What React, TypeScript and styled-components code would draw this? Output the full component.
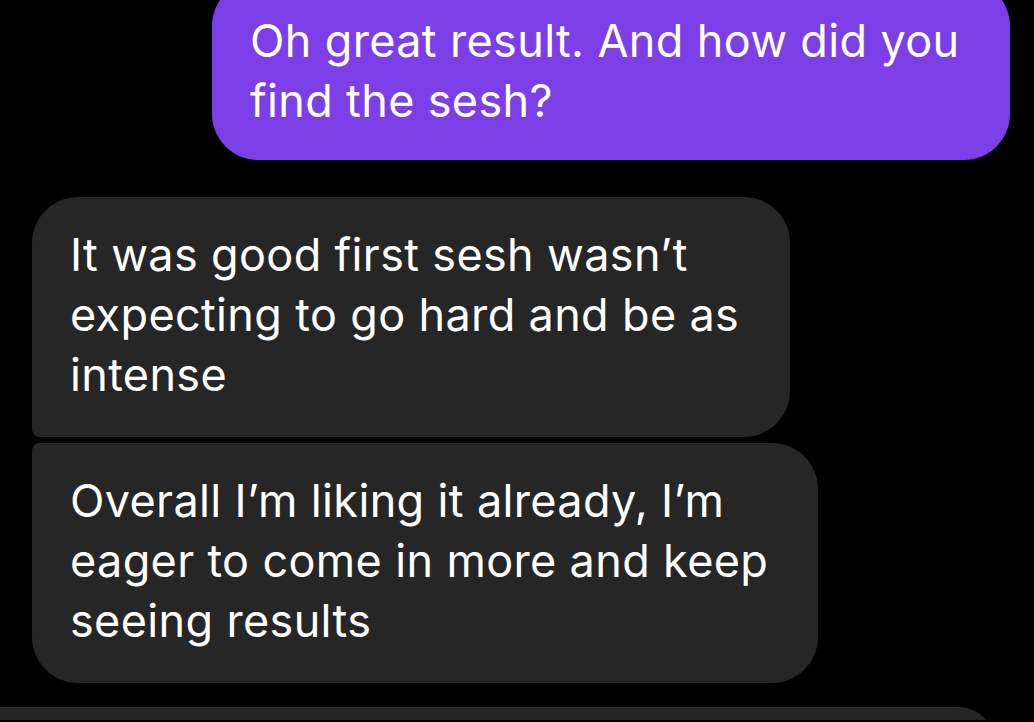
import React from "react";
import styled, { createGlobalStyle } from "styled-components";

const Global = createGlobalStyle`
  html, body {
    margin: 0;
    padding: 0;
    background: #000;
    overflow: hidden;
  }
  body {
    font-family: Inter, Roboto, "Liberation Sans", sans-serif;
  }
`;

const Thread = styled.div`
  display: flex;
  flex-direction: column;
  width: 1034px;
  height: 740px;
  overflow: hidden;
  background: #000;
  padding: 0 24px 0 32px;
  box-sizing: border-box;
  margin-top: -20px;
`;

type BubbleProps = {
  $mine?: boolean;
  $w: number;
  $tl?: number;
  $bl?: number;
  $gap?: number;
};

const Bubble = styled.div<BubbleProps>`
  box-sizing: border-box;
  width: ${(p) => p.$w}px;
  flex: none;
  align-self: ${(p) => (p.$mine ? "flex-end" : "flex-start")};
  margin-top: ${(p) => p.$gap ?? 0}px;
  padding: ${(p) => (p.$mine ? "31px 40px 29px 38px" : "28px 40px 32px 38px")};
  background: ${(p) => (p.$mine ? "#7c3ee6" : "#262626")};
  color: #fff;
  font-size: 45px;
  line-height: 60px;
  letter-spacing: 0.35px;
  border-radius: ${(p) => `${p.$tl ?? 46}px 46px 46px ${p.$bl ?? 46}px`};
  white-space: nowrap;
`;

const Trailing = styled.div`
  flex: none;
  margin-top: 24px;
  margin-left: -40px;
  width: 1005px;
  height: 80px;
  background: #252525;
  border-top: 1px solid #2e2e2e;
  border-radius: 0 40px 0 0;
`;

export default function App() {
  return (
    <>
      <Global />
      <Thread>
        <Bubble $mine $w={798}>
          Oh great result. And how did you
          <br />
          find the sesh?
        </Bubble>
        <Bubble $w={758} $gap={37} $bl={8}>
          It was good first sesh wasn’t
          <br />
          expecting to go hard and be as
          <br />
          intense
        </Bubble>
        <Bubble $w={786} $gap={6} $tl={8}>
          Overall I’m liking it already, I’m
          <br />
          eager to come in more and keep
          <br />
          seeing results
        </Bubble>
        <Trailing />
      </Thread>
    </>
  );
}
